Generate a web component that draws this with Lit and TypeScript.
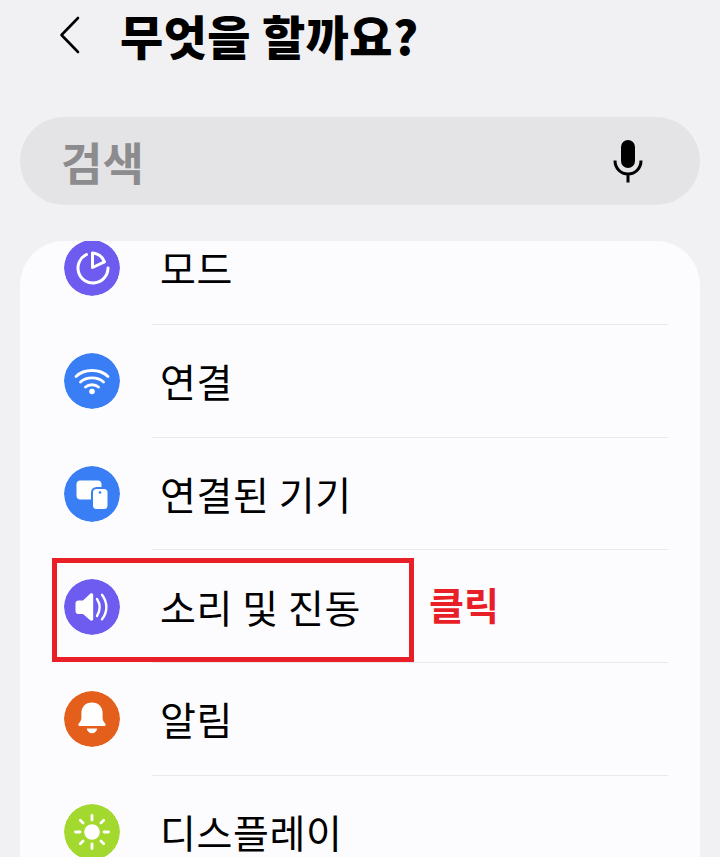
import { LitElement, html, css, svg } from 'lit';
import { customElement } from 'lit/decorators.js';

const icons = {
  mode: svg`<path d="M22.500 14.500A15 15 0 1 0 44 28" fill="none" stroke="#fff" stroke-width="3" stroke-linecap="round"/>
    <path d="M28.500 13v14.500L40.500 21.800C38.500 17 34 13.500 28.500 13z" fill="none" stroke="#fff" stroke-width="3" stroke-linejoin="round"/>`,
  wifi: svg`<g fill="none" stroke="#fff" stroke-width="2.800" stroke-linecap="round">
      <path d="M12 23.500C20 15.500 36 15.500 44 23.500"/>
      <path d="M16.500 29C22.500 23.500 33.500 23.500 39.500 29"/>
      <path d="M21.500 34C25 31 31 31 34.500 34"/>
    </g>
    <circle cx="28" cy="38.500" r="2.800" fill="#fff"/>`,
  devices: svg`<rect x="12.500" y="14.500" width="25" height="19" rx="4" fill="#fff"/>
    <rect x="28" y="22" width="16.500" height="22" rx="4.500" fill="#fff" stroke="#3a7ef5" stroke-width="2"/>
    <circle cx="36" cy="26.500" r="1.300" fill="#3a7ef5"/>`,
  sound: svg`<path d="M11.500 24.500a3 3 0 0 1 3-3h4.500l7.200-6.800c1-.9 3-.3 3 1.400v23.800c0 1.700-2 2.300-3 1.400L19 35h-4.500a3 3 0 0 1-3-3z" fill="#fff"/>
    <g fill="none" stroke="#fff" stroke-width="2.400" stroke-linecap="round">
      <path d="M33 20c3.400 5.200 3.400 11.500 0 17"/>
      <path d="M38 15.800c5.800 7.800 5.800 17 0 24.500"/>
    </g>`,
  bell: svg`<path d="M28 11.500c-6.800 0-10.600 4.800-10.600 10.400v4.800c0 2.600-1.200 4.200-2.600 5.700-.9 1-.6 2.600 1 2.600h24.400c1.600 0 1.900-1.600 1-2.600-1.400-1.500-2.600-3.100-2.600-5.700v-4.800C38.600 16.300 34.800 11.500 28 11.500z" fill="#fff"/>
    <path d="M22.700 37.500h10.600c-.6 3-2.800 4.800-5.300 4.800s-4.700-1.800-5.300-4.800z" fill="#fff"/>`,
  sun: svg`<circle cx="28" cy="28" r="7.800" fill="#fff"/>
    <g stroke="#fff" stroke-width="2.800" stroke-linecap="round">
      <path d="M28 11.500v4.500"/><path d="M28 40v4.500"/><path d="M11.500 28H16"/><path d="M40 28h4.500"/>
      <path d="M16.300 16.300l2.800 2.800"/><path d="M36.900 36.900l2.800 2.800"/><path d="M16.300 39.700l2.800-2.800"/><path d="M36.900 19.100l2.800-2.800"/>
    </g>`,
};

const rows = [
  { label: '모드', color: '#6e5cf0', icon: icons.mode },
  { label: '연결', color: '#3a7ef5', icon: icons.wifi },
  { label: '연결된 기기', color: '#3a7ef5', icon: icons.devices },
  { label: '소리 및 진동', color: '#6e5cf0', icon: icons.sound },
  { label: '알림', color: '#e55f1c', icon: icons.bell },
  { label: '디스플레이', color: '#a3d82f', icon: icons.sun },
];

@customElement('app-root')
export class AppRoot extends LitElement {
  static styles = css`
    :host {
      display: block;
      position: relative;
      height: 857px;
      overflow: hidden;
      background: #f1f1f4;
      font-family: 'Noto Sans CJK KR', 'Noto Sans', sans-serif;
      color: #000;
    }

    .header {
      display: flex;
      align-items: center;
      height: 70px;
      padding-left: 58px;
    }

    .back {
      width: 24px;
      height: 40px;
      margin-right: 38px;
    }

    h1 {
      margin: 0;
      font-size: 47px;
      line-height: 70px;
      font-weight: 900;
      letter-spacing: 0.400px;
      white-space: nowrap;
    }

    .search {
      display: flex;
      align-items: center;
      justify-content: space-between;
      height: 88px;
      margin: 47px 20px 36px;
      padding: 0 57px 0 41px;
      border-radius: 44px;
      background: #e4e4e6;
    }

    .search span {
      font-size: 45px;
      font-weight: 700;
      color: #8c8c8e;
    }

    .mic {
      width: 30px;
      height: 44px;
    }

    .card {
      height: 616px;
      margin: 0 20px;
      border-radius: 44px 44px 0 0;
      background: #fcfcfe;
      overflow: hidden;
    }

    .list {
      margin-top: -29px;
    }

    .row {
      display: flex;
      align-items: center;
      gap: 40px;
      height: 112.750px;
      padding-left: 44px;
      position: relative;
    }

    .row::after {
      content: '';
      position: absolute;
      left: 132px;
      right: 32px;
      bottom: 0;
      height: 1px;
      background: #e9e9ec;
    }

    .row:last-child::after {
      display: none;
    }

    .icon {
      flex: none;
      width: 56px;
      height: 56px;
      border-radius: 50%;
    }

    .label {
      font-size: 39px;
      line-height: 54px;
      letter-spacing: 0.600px;
      white-space: nowrap;
      padding-bottom: 2px;
    }

    .highlight {
      position: absolute;
      left: 52px;
      top: 558px;
      width: 352px;
      height: 94px;
      border: 5px solid #e81f27;
    }

    .note {
      position: absolute;
      left: 429px;
      top: 577px;
      font-size: 38px;
      line-height: 54px;
      font-weight: 700;
      color: #e81f27;
    }
  `;

  render() {
    return html`
      <div class="header">
        <svg class="back" viewBox="0 0 24 40">
          <path d="M20 3L3.500 20 20 37" fill="none" stroke="#000" stroke-width="2.600" stroke-linecap="round" stroke-linejoin="round"/>
        </svg>
        <h1>무엇을 할까요?</h1>
      </div>
      <div class="search">
        <span>검색</span>
        <svg class="mic" viewBox="0 0 30 44">
          <rect x="8" y="1" width="14" height="28" rx="7" fill="#000"/>
          <path d="M2 21.500c0 8 5.800 13.500 13 13.500s13-5.500 13-13.500M15 35v8.500" fill="none" stroke="#000" stroke-width="3"/>
        </svg>
      </div>
      <div class="card">
        <div class="list">
          ${rows.map(
            (r) => html`
              <div class="row">
                <svg class="icon" viewBox="0 0 56 56">
                  <circle cx="28" cy="28" r="28" fill="${r.color}"/>
                  ${r.icon}
                </svg>
                <span class="label">${r.label}</span>
              </div>
            `
          )}
        </div>
      </div>
      <div class="highlight"></div>
      <div class="note">클릭</div>
    `;
  }
}
